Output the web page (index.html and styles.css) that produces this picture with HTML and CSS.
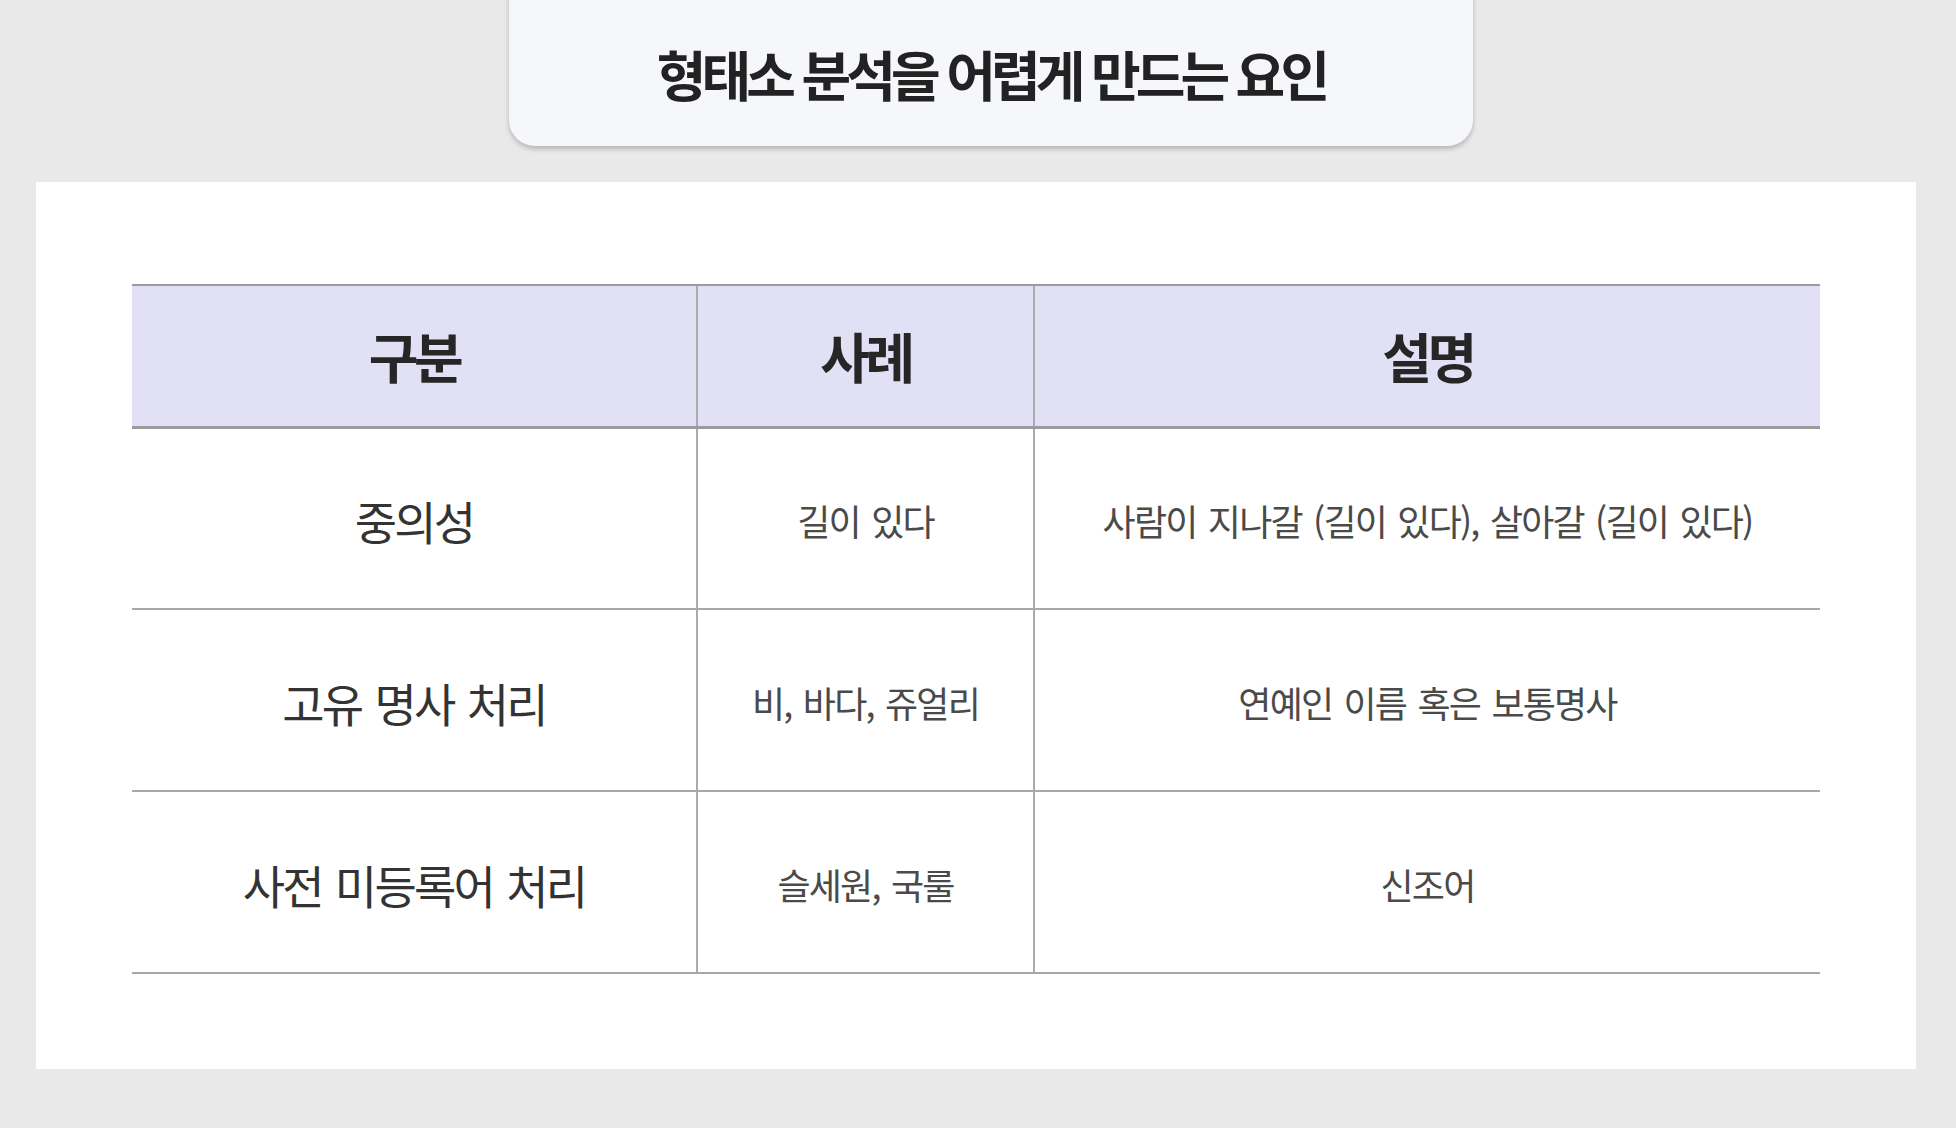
FILE: index.html
```html
<!DOCTYPE html>
<html lang="ko">
<head>
  <meta charset="UTF-8">
  <meta name="viewport" content="width=device-width, initial-scale=1.0">
  <title>형태소 분석을 어렵게 만드는 요인</title>
  <link rel="stylesheet" href="styles.css">
</head>
<body>
  <div class="title-tab">
    <h1>형태소 분석을 어렵게 만드는 요인</h1>
  </div>

  <div class="panel">
    <table class="factor-table">
      <colgroup>
        <col class="col-kind">
        <col class="col-case">
        <col class="col-desc">
      </colgroup>
      <thead>
        <tr>
          <th>구분</th>
          <th>사례</th>
          <th>설명</th>
        </tr>
      </thead>
      <tbody>
        <tr>
          <td class="kind">중의성</td>
          <td>길이 있다</td>
          <td>사람이 지나갈 (길이 있다), 살아갈 (길이 있다)</td>
        </tr>
        <tr>
          <td class="kind">고유 명사 처리</td>
          <td>비, 바다, 쥬얼리</td>
          <td>연예인 이름 혹은 보통명사</td>
        </tr>
        <tr>
          <td class="kind">사전 미등록어 처리</td>
          <td>슬세원, 국룰</td>
          <td>신조어</td>
        </tr>
      </tbody>
    </table>
  </div>
</body>
</html>
```

FILE: styles.css
```css
* {
  margin: 0;
  padding: 0;
  box-sizing: border-box;
}
body {
  background: #e9e9e9;
  font-family: 'Noto Sans CJK KR', 'Noto Sans', sans-serif;
  color: #333;
  min-height: 100vh;
  overflow: hidden;
}

/* 상단 제목 탭 */
.title-tab {
  width: 964px;
  height: 166px;
  margin: -20px 0 0 509px;
  padding-top: 20px;
  background: #f6f7fa;
  border-radius: 0 0 26px 26px;
  box-shadow: 0 3px 5px rgba(0,0,0,0.22);
  display: flex;
  justify-content: center;
  align-items: center;
}
.title-tab h1 {
  font-size: 54px;
  font-weight: 700;
  color: #222;
  letter-spacing: -0.09em;
}

/* 흰색 본문 패널 */
.panel {
  width: 1880px;
  height: 887px;
  margin: 36px 0 0 36px;
  background: #fff;
  padding: 102px 96px 0;
}

.factor-table {
  width: 100%;
  border-collapse: collapse;
  table-layout: fixed;
  text-align: center;
}
.col-kind { width: 565px; }
.col-case { width: 337px; }
.col-desc { width: 786px; }

.factor-table th {
  height: 142px;
  background: #e1e0f5;
  font-size: 54px;
  font-weight: 700;
  color: #262626;
  letter-spacing: -0.08em;
  border-top: 2px solid #9c9c9c;
  border-bottom: 3px solid #9a9a9f;
}
.factor-table th + th,
.factor-table td + td {
  border-left: 2px solid #ababab;
}
.factor-table td {
  height: 182px;
  padding-top: 4px;
  font-size: 36px;
  color: #4a4a4a;
  letter-spacing: -0.05em;
  word-spacing: 3px;
  border-bottom: 2px solid #a8a8a8;
}
.factor-table td.kind {
  font-size: 46px;
  color: #333;
  letter-spacing: -0.06em;
}
```
